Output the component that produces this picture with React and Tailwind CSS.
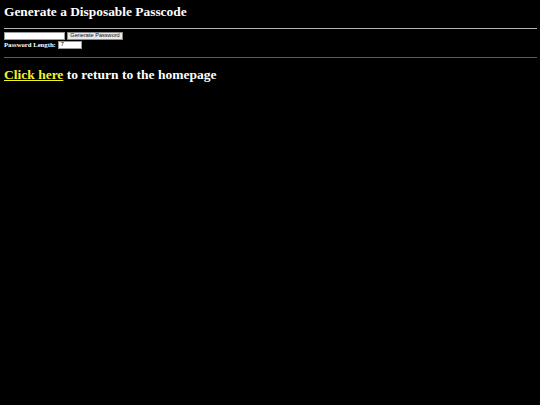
export default function App() {
  return (
    <div className="min-h-screen w-full bg-black px-[4px] pt-[4px] text-white" style={{ fontFamily: '"Liberation Serif", "Times New Roman", serif' }}>
      <h1 className="m-0 text-[13.4px] font-bold leading-[16px]">Generate a Disposable Passcode</h1>
      <div className="mt-[8px] h-[1px] w-[533px] bg-[#b4b4b4]"></div>
      <div className="mt-[3px] flex h-[8px] items-center gap-[2px]">
        <div className="h-[8px] w-[61px] border border-[#9a9a9a] bg-white"></div>
        <div
          className="flex h-[8px] w-[56px] items-center justify-center border border-[#8a8a8a] bg-[#e8e8e8] text-[5.6px] leading-none text-[#111]"
          style={{ fontFamily: '"Liberation Sans", Arial, sans-serif' }}
        >
          Generate Password
        </div>
      </div>
      <div className="mt-[1px] flex h-[8px] items-center gap-[2px]">
        <span className="text-[6.7px] font-bold leading-none">Password Length:</span>
        <div
          className="flex h-[8px] w-[24px] items-center border border-[#9a9a9a] bg-white pl-[2px] text-[5.6px] leading-none text-black"
          style={{ fontFamily: '"Liberation Sans", Arial, sans-serif' }}
        >
          7
        </div>
      </div>
      <div className="mt-[8px] h-[1px] w-[533px] bg-[#5c5c5c]"></div>
      <p className="m-0 mt-[9px] text-[13.5px] font-bold leading-[16px]">
        <a className="text-[#f2f230] underline" href="#">Click here</a> to return to the homepage
      </p>
    </div>
  );
}
